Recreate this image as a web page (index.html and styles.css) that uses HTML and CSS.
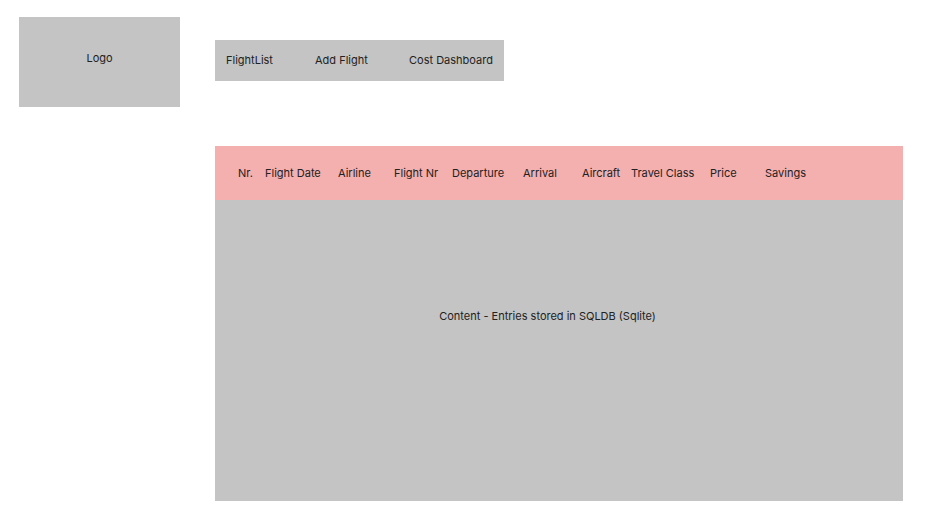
FILE: index.html
```html
<!DOCTYPE html>
<html lang="en">
<head>
<meta charset="utf-8">
<title>Flight List</title>
<link rel="stylesheet" href="styles.css">
</head>
<body>
<div class="page">
  <div class="logo">Logo</div>
  <div class="main">
    <nav class="nav">
      <a class="nav-item nav-list">FlightList</a>
      <a class="nav-item nav-add">Add Flight</a>
      <a class="nav-item nav-cost">Cost Dashboard</a>
    </nav>
    <section class="table">
      <div class="table-head">
        <span>Nr.</span>
        <span>Flight Date</span>
        <span>Airline</span>
        <span>Flight Nr</span>
        <span>Departure</span>
        <span>Arrival</span>
        <span>Aircraft</span>
        <span>Travel Class</span>
        <span>Price</span>
        <span>Savings</span>
      </div>
      <div class="table-body">Content - Entries stored in SQLDB (Sqlite)</div>
    </section>
  </div>
</div>
</body>
</html>
```
FILE: styles.css
```css
html, body {
  margin: 0;
  padding: 0;
  background: #ffffff;
}
body {
  font-family: Inter, "Noto Sans", sans-serif;
  font-size: 11px;
  color: #222222;
}
.page {
  display: flex;
  align-items: flex-start;
  padding: 17px 0 0 19px;
  gap: 35px;
}
.logo {
  width: 161px;
  height: 90px;
  background: #c4c4c4;
  display: flex;
  align-items: center;
  justify-content: center;
  padding-bottom: 9px;
  box-sizing: border-box;
}
.main {
  display: flex;
  flex-direction: column;
  padding-top: 23px;
}
.nav {
  width: 289px;
  height: 41px;
  background: #c4c4c4;
  display: flex;
  align-items: center;
  padding: 0 0 1px 11px;
  box-sizing: border-box;
}
.nav-item {
  color: #222222;
  text-decoration: none;
}
.nav-list { width: 89px; }
.nav-add { width: 94px; }
.table {
  margin-top: 65px;
  width: 688px;
}
.table-head {
  height: 54px;
  background: #f4afaf;
  display: grid;
  grid-template-columns: 27px 73px 56px 58px 71px 59px 49px 79px 55px auto;
  align-items: center;
  padding: 0 0 1px 23px;
  box-sizing: border-box;
  white-space: nowrap;
}
.table-body {
  height: 301px;
  background: #c4c4c4;
  box-sizing: border-box;
  padding: 109px 23px 0 0;
  text-align: center;
}
```
